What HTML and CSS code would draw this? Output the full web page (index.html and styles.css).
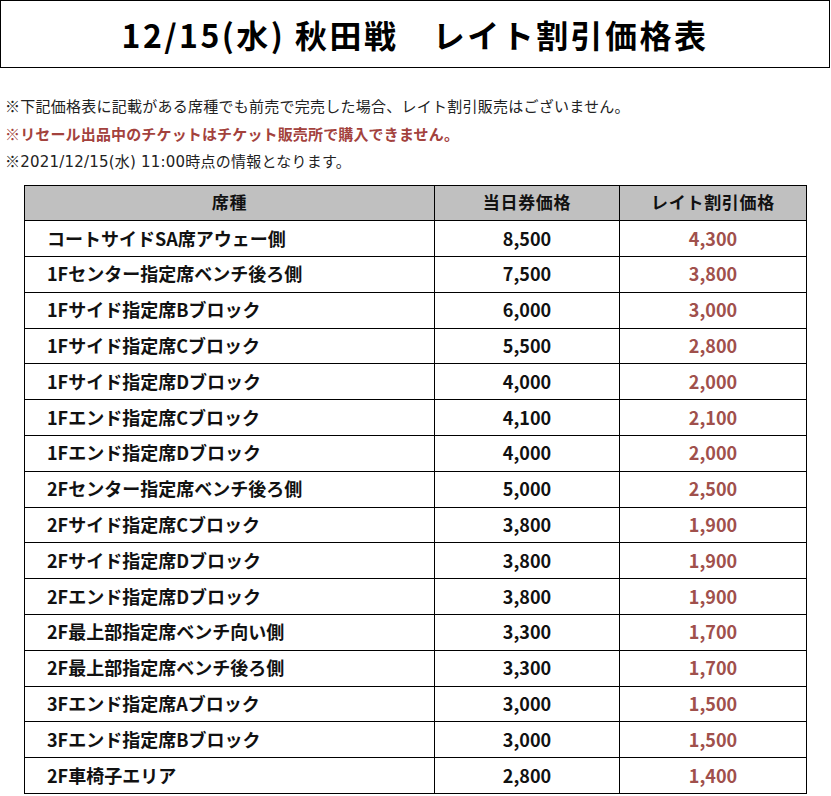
FILE: index.html
```html
<!DOCTYPE html>
<html lang="ja">
<head>
<meta charset="utf-8">
<title>12/15(水) 秋田戦 レイト割引価格表</title>
<link rel="stylesheet" href="styles.css">
</head>
<body>
<div class="page">
  <h1 class="title">12/15(水) 秋田戦　レイト割引価格表</h1>
  <div class="notes">
    <p class="note">※下記価格表に記載がある席種でも前売で完売した場合、レイト割引販売はございません。</p>
    <p class="note note-red">※リセール出品中のチケットはチケット販売所で購入できません。</p>
    <p class="note">※<span class="latin">2021/12/15(</span>水<span class="latin">) 11:00</span>時点の情報となります。</p>
  </div>
  <table class="price-table">
    <colgroup>
      <col class="col-seat">
      <col class="col-price">
      <col class="col-late">
    </colgroup>
    <thead>
      <tr><th>席種</th><th>当日券価格</th><th>レイト割引価格</th></tr>
    </thead>
    <tbody>
      <tr><td class="seat">コートサイドSA席アウェー側</td><td class="num">8,500</td><td class="num late">4,300</td></tr>
      <tr><td class="seat">1Fセンター指定席ベンチ後ろ側</td><td class="num">7,500</td><td class="num late">3,800</td></tr>
      <tr><td class="seat">1Fサイド指定席Bブロック</td><td class="num">6,000</td><td class="num late">3,000</td></tr>
      <tr><td class="seat">1Fサイド指定席Cブロック</td><td class="num">5,500</td><td class="num late">2,800</td></tr>
      <tr><td class="seat">1Fサイド指定席Dブロック</td><td class="num">4,000</td><td class="num late">2,000</td></tr>
      <tr><td class="seat">1Fエンド指定席Cブロック</td><td class="num">4,100</td><td class="num late">2,100</td></tr>
      <tr><td class="seat">1Fエンド指定席Dブロック</td><td class="num">4,000</td><td class="num late">2,000</td></tr>
      <tr><td class="seat">2Fセンター指定席ベンチ後ろ側</td><td class="num">5,000</td><td class="num late">2,500</td></tr>
      <tr><td class="seat">2Fサイド指定席Cブロック</td><td class="num">3,800</td><td class="num late">1,900</td></tr>
      <tr><td class="seat">2Fサイド指定席Dブロック</td><td class="num">3,800</td><td class="num late">1,900</td></tr>
      <tr><td class="seat">2Fエンド指定席Dブロック</td><td class="num">3,800</td><td class="num late">1,900</td></tr>
      <tr><td class="seat">2F最上部指定席ベンチ向い側</td><td class="num">3,300</td><td class="num late">1,700</td></tr>
      <tr><td class="seat">2F最上部指定席ベンチ後ろ側</td><td class="num">3,300</td><td class="num late">1,700</td></tr>
      <tr><td class="seat">3Fエンド指定席Aブロック</td><td class="num">3,000</td><td class="num late">1,500</td></tr>
      <tr><td class="seat">3Fエンド指定席Bブロック</td><td class="num">3,000</td><td class="num late">1,500</td></tr>
      <tr><td class="seat">2F車椅子エリア</td><td class="num">2,800</td><td class="num late">1,400</td></tr>
    </tbody>
  </table>
</div>
</body>
</html>
```
FILE: styles.css
```css
html, body {
  margin: 0;
  padding: 0;
  background: #ffffff;
}
body {
  font-family: "Noto Sans CJK JP", "Noto Sans", sans-serif;
  color: #111111;
}
.page {
  width: 831px;
}
.title {
  box-sizing: border-box;
  width: 830px;
  height: 68px;
  margin: 0;
  border: 1px solid #000000;
  display: flex;
  align-items: center;
  justify-content: center;
  font-size: 32px;
  font-weight: 700;
  letter-spacing: 2.45px;
  line-height: 1;
  color: #000000;
}
.notes {
  padding: 24px 0 0 5px;
}
.note {
  margin: 0;
  font-size: 15px;
  height: 27.5px;
  line-height: 27.5px;
  letter-spacing: 0.25px;
  color: #222222;
}
.latin {
  font-family: "DejaVu Sans", "Noto Sans", sans-serif;
  letter-spacing: 0.2px;
  line-height: 1;
}
.note-red {
  color: #a3423d;
  font-weight: 700;
  letter-spacing: 0.15px;
}
.price-table {
  margin: 10px 0 0 24px;
  border-collapse: collapse;
  width: 782px;
  table-layout: fixed;
}
.col-seat { width: 410px; }
.col-price { width: 185px; }
.col-late { width: 187px; }
.price-table th,
.price-table td {
  border: 1px solid #000000;
  height: 35.8px;
  padding: 0 0 2px 0;
  box-sizing: border-box;
  vertical-align: middle;
  font-weight: 700;
  line-height: 1;
}
.price-table th {
  background: #c0c0c0;
  font-size: 17px;
  letter-spacing: 0.7px;
  text-align: center;
  color: #111111;
}
.price-table td {
  font-size: 18px;
}
.seat {
  text-align: left;
  padding-left: 22px !important;
}
.num {
  text-align: center;
}
.late {
  color: #a0504c;
}
```
